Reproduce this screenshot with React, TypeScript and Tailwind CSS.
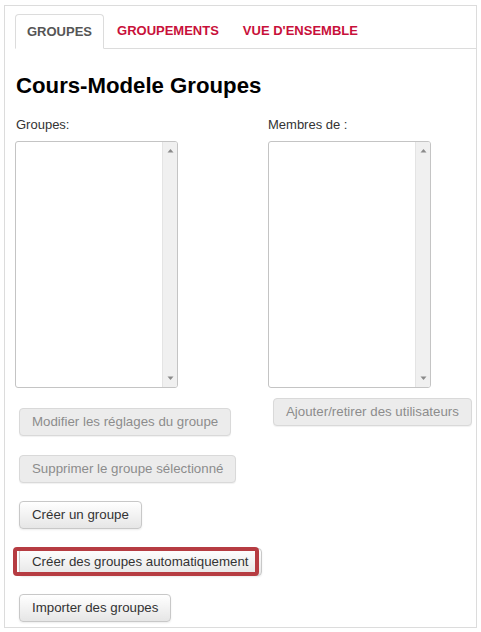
import React from "react";

const FONT = { fontFamily: '"Liberation Sans", Arial, sans-serif' };

function ListBox() {
  return (
    <div className="flex h-[247px] w-[163px] overflow-hidden rounded-[3px] border border-[#c4c4c4] bg-white">
      <div className="flex-1" />
      <div className="flex w-[15px] flex-col justify-between border-l border-[#e4e4e4] bg-[#f0f0f0] py-[6px]">
        <svg width="15" height="5" viewBox="0 0 15 5">
          <path d="M4.5 4.5 L7.5 1 L10.5 4.5 Z" fill="#8a8a8a" />
        </svg>
        <svg width="15" height="5" viewBox="0 0 15 5">
          <path d="M4.5 0.5 L7.5 4 L10.5 0.5 Z" fill="#8a8a8a" />
        </svg>
      </div>
    </div>
  );
}

function DisabledButton({ label }: { label: string }) {
  return (
    <button
      disabled
      className="h-[28px] whitespace-nowrap rounded-[4px] border border-[#d9d9d9] bg-[#ececec] px-[12px] text-[13.3px] text-[#8c8c8c] shadow-[0_1px_1px_rgba(0,0,0,0.06)]"
    >
      {label}
    </button>
  );
}

function ActiveButton({ label }: { label: string }) {
  return (
    <button className="h-[28px] whitespace-nowrap rounded-[4px] border border-[#c8c8c8] bg-gradient-to-b from-white to-[#e6e6e6] px-[12px] text-[13.3px] text-[#333] shadow-[0_1px_2px_rgba(0,0,0,0.08)]">
      {label}
    </button>
  );
}

export default function App() {
  return (
    <div style={FONT} className="bg-white pl-[4px] pt-[5px]">
      <div className="h-[623px] w-[473px] border border-[#dcdcdc] px-[10px] pt-[8px]">
        {/* onglets */}
        <ul className="-mr-[10px] flex border-b border-[#dcdcdc]">
          <li className="-mb-px mr-[2px] flex h-[35px] items-center rounded-t-[4px] border border-[#dcdcdc] border-b-white bg-white px-[11px] text-[13px] font-bold text-[#555]">
            GROUPES
          </li>
          <li className="mr-[2px] flex h-[34px] items-center px-[11px] text-[13px] font-bold text-[#c8103a]">
            GROUPEMENTS
          </li>
          <li className="flex h-[34px] items-center px-[11px] text-[13px] font-bold text-[#c8103a]">
            VUE D'ENSEMBLE
          </li>
        </ul>

        <h2 className="ml-px mt-[24px] text-[22.2px] font-bold leading-[26px] text-black">
          Cours-Modele Groupes
        </h2>

        <div className="mt-[17px] grid grid-cols-[253px_1fr]">
          <div className="flex flex-col">
            <label className="ml-px text-[13px] leading-[18px] text-[#333]">Groupes:</label>
            <div className="mt-[7px]">
              <ListBox />
            </div>
            <div className="ml-[4px] mt-[20px] flex flex-col items-start gap-[18.5px]">
              <DisabledButton label="Modifier les réglages du groupe" />
              <DisabledButton label="Supprimer le groupe sélectionné" />
              <ActiveButton label="Créer un groupe" />
              <div className="relative">
                <ActiveButton label="Créer des groupes automatiquement" />
                <span className="pointer-events-none absolute -left-[6px] -top-px bottom-0 right-[3px] rounded-[4px] border-[4px] border-[#b63c42]" />
              </div>
              <ActiveButton label="Importer des groupes" />
            </div>
          </div>
          <div className="flex flex-col">
            <label className="text-[13px] leading-[18px] text-[#333]">Membres de :</label>
            <div className="mt-[7px]">
              <ListBox />
            </div>
            <div className="ml-[5px] mt-[10px] flex flex-col items-start">
              <DisabledButton label="Ajouter/retirer des utilisateurs" />
            </div>
          </div>
        </div>
      </div>
    </div>
  );
}
